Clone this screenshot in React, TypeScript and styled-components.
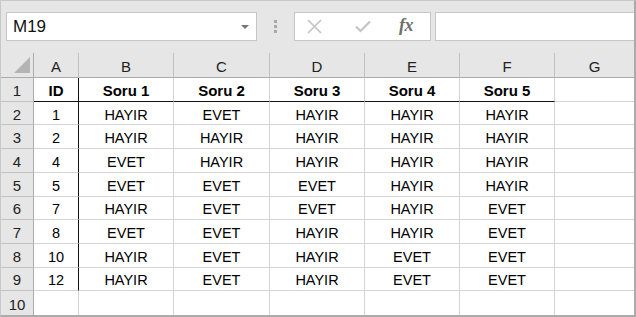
import React from 'react'
import styled, { createGlobalStyle } from 'styled-components'

const GlobalStyle = createGlobalStyle`
  body {
    margin: 0;
    background: #ffffff;
    font-family: "Liberation Sans", Arial, sans-serif;
  }
`

const Window = styled.div`
  width: 636px;
  height: 317px;
  box-sizing: border-box;
  border-top: 1px solid #c8c8c8;
  border-left: 1px solid #c8c8c8;
  border-right: 2px solid #ababab;
  border-bottom: 2px solid #ababab;
  background: #e6e6e6;
  display: flex;
  flex-direction: column;
  overflow: hidden;
`

const FormulaBar = styled.div`
  height: 52px;
  box-sizing: border-box;
  padding: 11px 0 0 5px;
  display: flex;
  align-items: flex-start;
`

const NameBox = styled.div`
  width: 251px;
  height: 29px;
  box-sizing: border-box;
  border: 1px solid #c6c6c6;
  background: #fff;
  display: flex;
  align-items: center;
  justify-content: space-between;
  padding: 0 7px 0 6px;
  font-size: 17px;
  color: #111;
`

const Caret = styled.span`
  width: 0;
  height: 0;
  border-left: 4px solid transparent;
  border-right: 4px solid transparent;
  border-top: 4px solid #777;
  margin-top: 1px;
`

const Grip = styled.div`
  width: 37px;
  height: 29px;
  display: flex;
  flex-direction: column;
  align-items: center;
  justify-content: center;
  gap: 2px;
  & > span {
    width: 3px;
    height: 3px;
    background: #a8a8a8;
  }
`

const Buttons = styled.div`
  width: 137px;
  height: 29px;
  box-sizing: border-box;
  border: 1px solid #c6c6c6;
  background: #fff;
  display: flex;
  align-items: center;
  padding-left: 12px;
`

const IconSlot = styled.div<{ $w: number }>`
  width: ${p => p.$w}px;
  display: flex;
  align-items: center;
`

const Fx = styled.span`
  font-family: "Liberation Serif", "Times New Roman", serif;
  font-style: italic;
  font-weight: 700;
  font-size: 18px;
  color: #6e6e6e;
  letter-spacing: -0.5px;
  margin-top: -2px;
`

const FormulaInput = styled.div`
  flex: 1;
  height: 29px;
  margin-left: 4px;
  box-sizing: border-box;
  border: 1px solid #c6c6c6;
  border-right: none;
  background: #fff;
`

const Sheet = styled.div`
  flex: 1;
  display: grid;
  grid-template-columns: 33px 45px 95px 96px 95px 95px 95px 1fr;
  grid-template-rows: 25px repeat(10, 1fr);
  font-size: 14.5px;
`

const Corner = styled.div`
  border-right: 1px solid #ababab;
  border-bottom: 1px solid #ababab;
  position: relative;
  &::after {
    content: '';
    position: absolute;
    right: 3px;
    bottom: 4px;
    width: 0;
    height: 0;
    border-left: 16px solid transparent;
    border-bottom: 16px solid #b4b4b4;
  }
`

const ColHead = styled.div<{ $last?: boolean }>`
  border-right: ${p => (p.$last ? 'none' : '1px solid #c2c2c2')};
  border-bottom: 1px solid #ababab;
  display: flex;
  align-items: center;
  justify-content: center;
  padding-top: 3px;
  box-sizing: border-box;
  color: #222;
  font-size: 15px;
`

const RowHead = styled.div<{ $last?: boolean }>`
  border-right: 1px solid #ababab;
  border-bottom: ${p => (p.$last ? 'none' : '1px solid #c2c2c2')};
  display: flex;
  align-items: center;
  justify-content: center;
  padding-top: 2px;
  box-sizing: border-box;
  color: #222;
  font-size: 15px;
`

const Cell = styled.div<{ $bold?: boolean; $right?: boolean; $under?: boolean; $last?: boolean; $edge?: boolean }>`
  background: #fff;
  border-right: ${p => (p.$edge ? 'none' : p.$right ? '1px solid #111' : '1px solid #d4d4d4')};
  border-bottom: ${p => (p.$last ? 'none' : p.$under ? '1px solid #111' : '1px solid #d4d4d4')};
  display: flex;
  align-items: center;
  justify-content: center;
  padding-top: 3px;
  box-sizing: border-box;
  color: #000;
  font-weight: ${p => (p.$bold ? 700 : 400)};
  font-size: ${p => (p.$bold ? '15px' : 'inherit')};
`

const columns = ['A', 'B', 'C', 'D', 'E', 'F', 'G']

const rows: string[][] = [
  ['ID', 'Soru 1', 'Soru 2', 'Soru 3', 'Soru 4', 'Soru 5'],
  ['1', 'HAYIR', 'EVET', 'HAYIR', 'HAYIR', 'HAYIR'],
  ['2', 'HAYIR', 'HAYIR', 'HAYIR', 'HAYIR', 'HAYIR'],
  ['4', 'EVET', 'HAYIR', 'HAYIR', 'HAYIR', 'HAYIR'],
  ['5', 'EVET', 'EVET', 'EVET', 'HAYIR', 'HAYIR'],
  ['7', 'HAYIR', 'EVET', 'EVET', 'HAYIR', 'EVET'],
  ['8', 'EVET', 'EVET', 'HAYIR', 'HAYIR', 'EVET'],
  ['10', 'HAYIR', 'EVET', 'HAYIR', 'EVET', 'EVET'],
  ['12', 'HAYIR', 'EVET', 'HAYIR', 'EVET', 'EVET'],
  [],
]

export default function App() {
  return (
    <>
      <GlobalStyle />
      <Window>
        <FormulaBar>
          <NameBox>
            <span>M19</span>
            <Caret />
          </NameBox>
          <Grip>
            <span />
            <span />
            <span />
          </Grip>
          <Buttons>
            <IconSlot $w={48}>
              <svg width="15" height="15" viewBox="0 0 15 15">
                <path d="M1 1L14 14M14 1L1 14" stroke="#c4c4c4" strokeWidth="1.7" fill="none" />
              </svg>
            </IconSlot>
            <IconSlot $w={44}>
              <svg width="16" height="13" viewBox="0 0 16 13">
                <path d="M1 6.5L5.5 11L15 1.5" stroke="#c4c4c4" strokeWidth="2.2" fill="none" />
              </svg>
            </IconSlot>
            <IconSlot $w={24}>
              <Fx>fx</Fx>
            </IconSlot>
          </Buttons>
          <FormulaInput />
        </FormulaBar>
        <Sheet>
          <Corner />
          {columns.map((c, i) => (
            <ColHead key={c} $last={i === columns.length - 1}>{c}</ColHead>
          ))}
          {rows.map((r, ri) => (
            <React.Fragment key={ri}>
              <RowHead $last={ri === rows.length - 1}>{ri + 1}</RowHead>
              {columns.map((c, ci) => (
                <Cell
                  key={c}
                  $bold={ri === 0}
                  $right={ci === 0 && ri < 9}
                  $under={ri === 0 && ci < 6}
                  $last={ri === rows.length - 1}
                  $edge={ci === columns.length - 1}
                >
                  {r[ci] ?? ''}
                </Cell>
              ))}
            </React.Fragment>
          ))}
        </Sheet>
      </Window>
    </>
  )
}
